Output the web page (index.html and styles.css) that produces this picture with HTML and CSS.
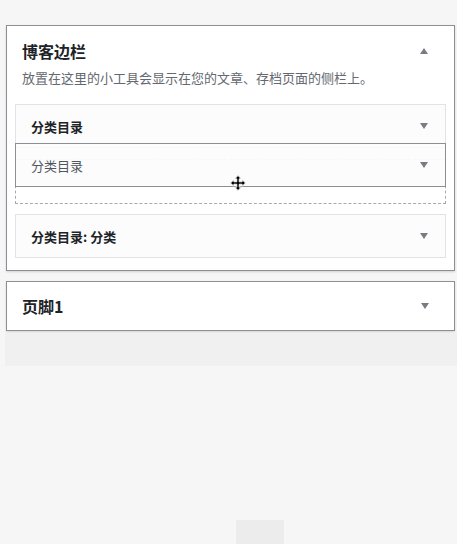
FILE: index.html
```html
<!DOCTYPE html>
<html lang="zh-CN">
<head>
  <meta charset="UTF-8" />
  <title>小工具</title>
  <link rel="stylesheet" href="styles.css">
</head>
<body>

  <div class="sidebars">

    <!-- 博客边栏 (opened) -->
    <div class="sidebar">
      <div class="sidebar-head">
        <h2>博客边栏</h2>
        <span class="arrow up"></span>
      </div>
      <p class="sidebar-desc">放置在这里的小工具会显示在您的文章、存档页面的侧栏上。</p>

      <div class="widgets">
        <div class="widget">
          <h3>分类目录</h3>
          <span class="arrow down"></span>
        </div>

        <div class="widget-placeholder"></div>

        <div class="widget last">
          <h3>分类目录: 分类</h3>
          <span class="arrow down"></span>
        </div>

        <!-- widget being dragged -->
        <div class="widget dragging">
          <h3>分类目录</h3>
          <span class="arrow down"></span>
        </div>

        <svg class="move-cursor" width="16" height="16" viewBox="0 0 15 15">
          <path d="M7.5 0.5 L10.5 3.6 H8.6 V6.4 H11.4 V4.5 L14.5 7.5 L11.4 10.5 V8.6 H8.6 V11.4 H10.5 L7.5 14.5 L4.5 11.4 H6.4 V8.6 H3.6 V10.5 L0.5 7.5 L3.6 4.5 V6.4 H6.4 V3.6 H4.5 Z" fill="#000" stroke="#fff" stroke-width="0.8" stroke-linejoin="round"/>
        </svg>
      </div>
    </div>

    <!-- 页脚1 (closed) -->
    <div class="sidebar closed">
      <div class="sidebar-head">
        <h2>页脚1</h2>
        <span class="arrow down"></span>
      </div>
    </div>

    <div class="drop-band"></div>
    <div class="scroll-stub"></div>
  </div>

</body>
</html>
```

FILE: styles.css
```css
body {
  margin: 0;
  background: #f6f6f6;
  font-family: "Noto Sans CJK SC", "Noto Sans", sans-serif;
  color: #1d2327;
}

.sidebars {
  padding: 25px 2px 0 6px;
}

.sidebar {
  background: #fff;
  border: 1px solid #8c8f94;
  box-shadow: 0 1px 2px rgba(0, 0, 0, 0.15);
}

.sidebar-head {
  display: flex;
  justify-content: space-between;
  align-items: center;
  padding: 15px 26px 0 15px;
}

.sidebar-head h2 {
  margin: 0;
  font-size: 16px;
  line-height: 20px;
  font-weight: 600;
}

.sidebar-desc {
  margin: 7px 0 0;
  padding: 0 15px;
  font-size: 13px;
  line-height: 20px;
  color: #646970;
}

.widgets {
  position: relative;
  padding: 16px 8px 12px;
}

.widget {
  display: flex;
  justify-content: space-between;
  align-items: center;
  height: 42px;
  padding: 0 17px 0 15px;
  margin-bottom: 10px;
  background: #fcfcfc;
  border: 1px solid #e3e3e5;
}

.widget.last {
  margin-bottom: 0;
}

.widget h3 {
  margin: 0;
  font-size: 13px;
  font-weight: 600;
  color: #1d2327;
}

.widget-placeholder {
  height: 43px;
  margin: 11px 0 10px;
  border: 1px dashed #a7aaad;
  border-top-color: #dcdcde;
}

.widget.dragging {
  position: absolute;
  top: 55px;
  left: 8px;
  right: 8px;
  margin: 0;
  border-color: #8c8f94;
  background: rgba(252, 252, 252, 0.85);
}

.widget.dragging h3 {
  font-weight: 400;
  color: #50575e;
}

.move-cursor {
  position: absolute;
  top: 87px;
  left: 223px;
}

.sidebar.closed {
  margin-top: 10px;
  height: 48px;
}

.sidebar.closed .sidebar-head {
  height: 48px;
  padding: 0 25px 0 15px;
}

/* toggle arrows */
.arrow {
  width: 0;
  height: 0;
  border-left: 4.5px solid transparent;
  border-right: 4.5px solid transparent;
}

.arrow.up {
  border-bottom: 6px solid #787c82;
}

.arrow.down {
  border-top: 6px solid #787c82;
}

.drop-band {
  height: 33px;
  margin: 2px -2px 0 -1px;
  background: #f0f0f0;
}

.scroll-stub {
  width: 48px;
  height: 24px;
  margin: 154px 0 0 230px;
  background: #ececec;
}
```
